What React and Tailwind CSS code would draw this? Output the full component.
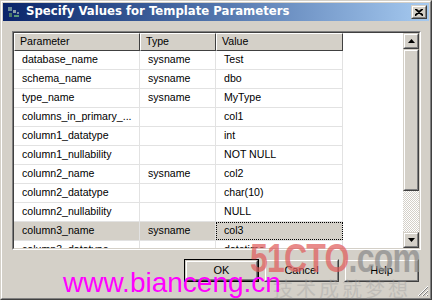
import React from "react";

const rows = [
  ["database_name", "sysname", "Test"],
  ["schema_name", "sysname", "dbo"],
  ["type_name", "sysname", "MyType"],
  ["columns_in_primary_...", "", "col1"],
  ["column1_datatype", "", "int"],
  ["column1_nullability", "", "NOT NULL"],
  ["column2_name", "sysname", "col2"],
  ["column2_datatype", "", "char(10)"],
  ["column2_nullability", "", "NULL"],
  ["column3_name", "sysname", "col3"],
  ["column3_datatype", "", "datetime"],
];

function Raised({ className = "", children }) {
  return (
    <div className={"border border-t-[#d4d0c8] border-l-[#d4d0c8] border-r-[#404040] border-b-[#404040] bg-[#d4d0c8] " + className}>
      <div className="w-full h-full border border-t-white border-l-white border-r-[#808080] border-b-[#808080] flex items-center justify-center">
        {children}
      </div>
    </div>
  );
}

function Arrow({ down }) {
  return (
    <svg width="7" height="4" viewBox="0 0 7 4">
      {down ? <polygon points="0,0 7,0 3.5,4" fill="#000" /> : <polygon points="3.5,0 7,4 0,4" fill="#000" />}
    </svg>
  );
}

export default function App() {
  return (
    <div
      className="w-[432px] h-[300px] relative overflow-hidden bg-[#d4d0c8] border border-t-[#d4d0c8] border-l-[#d4d0c8] border-r-[#404040] border-b-[#404040]"
      style={{ fontFamily: '"Liberation Sans", Arial, sans-serif' }}
    >
      <div className="w-full h-full border border-t-white border-l-white border-r-[#808080] border-b-[#808080] p-px flex flex-col">
        {/* Title bar */}
        <div className="h-[18px] shrink-0 flex items-center bg-gradient-to-r from-[#0a246a] to-[#a6caf0] pl-[3px] pr-[2px]">
          <svg width="16" height="16" viewBox="0 0 16 16" className="shrink-0">
            <rect x="2" y="3" width="4" height="4" fill="#6a8a9a" />
            <rect x="7" y="6" width="3" height="3" fill="#8aa0a8" />
            <rect x="3" y="9" width="3" height="4" fill="#4a7a6a" />
            <rect x="8" y="11" width="5" height="2" fill="#5a9a7a" />
            <rect x="11" y="8" width="2" height="2" fill="#7a90a0" />
          </svg>
          <span
            className="ml-[4px] text-white font-bold text-[11.7px] leading-none whitespace-nowrap"
            style={{ fontFamily: '"DejaVu Sans", Verdana, sans-serif' }}
          >
            Specify Values for Template Parameters
          </span>
          <div className="flex-1" />
          <Raised className="w-[16px] h-[14px]">
            <svg width="8" height="7" viewBox="0 0 8 7">
              <path d="M0 0 L8 7 M1 0 L8 6 M8 0 L0 7 M7 0 L0 6" stroke="#000" strokeWidth="1.2" />
            </svg>
          </Raised>
        </div>

        {/* Grid panel */}
        <div className="mt-[10px] ml-[9px] w-[409px] h-[219px] shrink-0 border border-t-[#808080] border-l-[#808080] border-r-white border-b-white">
          <div className="w-full h-full border border-t-[#404040] border-l-[#404040] border-r-[#d4d0c8] border-b-[#d4d0c8] bg-white flex overflow-hidden">
            <div className="w-[329px] shrink-0 flex flex-col text-[10.6px] text-black">
              <div className="flex h-[18px] shrink-0">
                {["Parameter", "Type", "Value"].map((h, i) => (
                  <div
                    key={h}
                    className={
                      "h-full border border-t-white border-l-white border-r-[#404040] border-b-[#404040] bg-[#d4d0c8] flex items-center pl-[5px] " +
                      (i === 0 ? "w-[126px]" : i === 1 ? "w-[76px]" : "w-[127px]")
                    }
                  >
                    {h}
                  </div>
                ))}
              </div>
              {rows.map((r, idx) => {
                const sel = idx === 9;
                return (
                  <div key={idx} className={"flex h-[19px] shrink-0 border-b border-[#e2e2e2] " + (sel ? "bg-[#d4d0c8]" : "")}>
                    <div className="w-[126px] h-full border-r border-[#e2e2e2] flex items-center pl-[8px] whitespace-nowrap overflow-hidden">{r[0]}</div>
                    <div className="w-[76px] h-full border-r border-[#e2e2e2] flex items-center pl-[8px] whitespace-nowrap">{r[1]}</div>
                    <div className={"w-[127px] h-full border-r border-[#e2e2e2] flex items-center pl-[8px] whitespace-nowrap " + (sel ? "outline outline-1 outline-dotted outline-black -outline-offset-1" : "")}>
                      {r[2]}
                    </div>
                  </div>
                );
              })}
            </div>
            <div className="flex-1" />
            {/* Scrollbar */}
            <div className="w-[16px] shrink-0 flex flex-col">
              <Raised className="w-[16px] h-[16px] shrink-0"><Arrow /></Raised>
              <Raised className="w-[16px] h-[142px] shrink-0" />
              <div className="flex-1 bg-[repeating-conic-gradient(#ffffff_0_25%,#d4d0c8_0_50%)] bg-[length:2px_2px]" />
              <Raised className="w-[16px] h-[16px] shrink-0"><Arrow down /></Raised>
            </div>
          </div>
        </div>

        {/* Buttons */}
        <div className="mt-[9px] mr-[10px] flex justify-end gap-[5px] text-[11px] text-black">
          <div className="w-[75px] h-[23px] border border-black">
            <Raised className="w-full h-full">OK</Raised>
          </div>
          <Raised className="w-[75px] h-[23px]">Cancel</Raised>
          <Raised className="w-[75px] h-[23px]">Help</Raised>
        </div>
      </div>

      {/* Resize grip */}
      <svg className="absolute right-[2px] bottom-[2px]" width="12" height="12" viewBox="0 0 12 12">
        <path d="M11 1 L1 11 M11 5 L5 11 M11 9 L9 11" stroke="#fff" strokeWidth="1" />
        <path d="M11 2 L2 11 M11 6 L6 11 M11 10 L10 11" stroke="#808080" strokeWidth="1" />
      </svg>

      {/* Watermarks */}
      <div className="absolute left-[249px] top-[237px] font-bold text-[40px] leading-none tracking-[-1px] whitespace-nowrap opacity-70 scale-x-[0.8] origin-left">
        <span className="text-[#e05a5a]">51CTO</span>
        <span className="text-[#8a8a8a]">.com</span>
      </div>
      <div
        className="absolute left-[272px] top-[278px] text-[20px] leading-none tracking-[3px] text-[#a0a0a0] opacity-40 whitespace-nowrap"
        style={{ fontFamily: '"Noto Sans CJK SC", sans-serif' }}
      >
        技术成就梦想
      </div>
      <div className="absolute left-[62px] top-[268px] text-[28px] leading-none text-[#ff00ff] whitespace-nowrap">
        www.bianceng.cn
      </div>
    </div>
  );
}
